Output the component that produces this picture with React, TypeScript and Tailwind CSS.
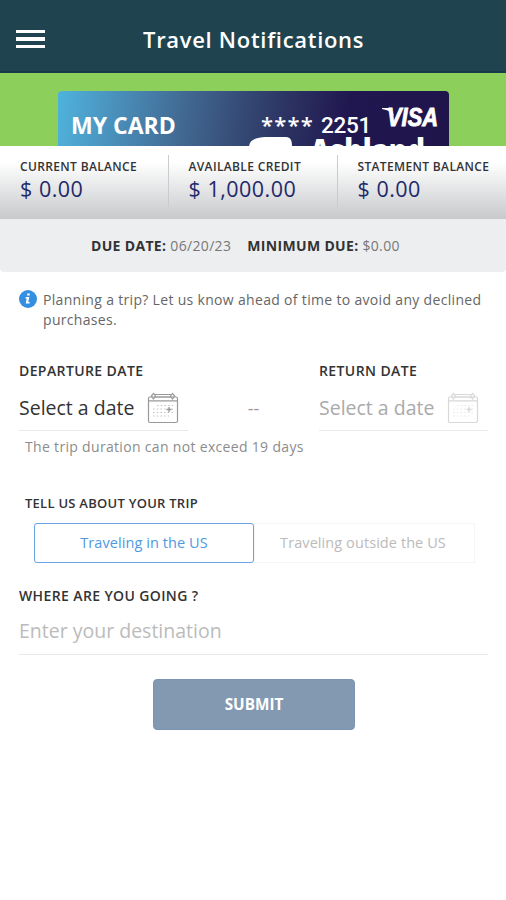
import { useState } from 'react';

const balances = [
  { label: 'CURRENT BALANCE', value: '$ 0.00' },
  { label: 'AVAILABLE CREDIT', value: '$ 1,000.00' },
  { label: 'STATEMENT BALANCE', value: '$ 0.00' },
];

function CalendarIcon({ className }: { className?: string }) {
  return (
    <svg width="32" height="32" viewBox="0 0 32 32" fill="none" stroke="currentColor" strokeWidth="1.2" className={className}>
      <rect x="1.5" y="5" width="29" height="25.5" rx="1.5" />
      <path d="M1.5 8.8h29M8 2.5h16M8 5h16" />
      <path d="M6.5 1.5 4.3 4l2.2 3 2-3zM25.500 1.500l-2 2.500 2 3 2.200-3z" />
      <path d="M10 13.500h16M6 17h20M6 20.500h20M6 24h16" strokeDasharray="1.500 2.200" strokeWidth="1" opacity="0.6" />
      <path d="M22 15v5M19.500 17.500h5" strokeWidth="1.300" />
    </svg>
  );
}

function Header() {
  return (
    <header className="flex h-[73px] items-center border-b-2 border-[#163b4b] bg-[#1f444f] pt-[7px]">
      <button aria-label="Menu" className="ml-4 flex w-[29px] flex-col gap-1">
        <span className="h-[3.500px] bg-white" />
        <span className="h-[3.500px] bg-white" />
        <span className="h-[3.500px] bg-white" />
      </button>
      <h1 className="ml-[98px] text-[22px] font-semibold leading-7 tracking-[0.7px] whitespace-nowrap text-white">
        Travel Notifications
      </h1>
    </header>
  );
}

function CardBanner() {
  return (
    <section className="h-[73px] overflow-hidden bg-[#8ccf5a] pt-[18px]">
      <div className="relative ml-[58px] flex h-[120px] w-[391px] items-start overflow-hidden rounded-[4px] bg-[linear-gradient(97deg,#4fb3dc_0%,#4a94bf_13%,#416891_32%,#2f3b68_53%,#211750_72%,#1f144a_100%)] text-white">
        <span className="mt-[19px] ml-[13px] w-[190px] text-[23px] font-bold leading-[30px] whitespace-nowrap">MY CARD</span>
        <span className="mt-[18px] w-[60px] text-[22px] font-semibold leading-[30px] tracking-[1.2px] whitespace-nowrap">****</span>
        <span className="mt-[19px] text-[22.500px] font-medium leading-[30px] tracking-[-0.3px] whitespace-nowrap font-[Roboto]">2251</span>
        <svg width="60" height="24" viewBox="0 0 60 24" className="absolute top-[14px] left-[323px]" fill="#fff">
          <path d="M1 3h9l3 8C10 7 7 5 1 4z" />
          <text x="6" y="20.500" fontFamily="Liberation Sans" fontSize="25" fontWeight="700" fontStyle="italic" textLength="51" lengthAdjust="spacingAndGlyphs" stroke="#fff" strokeWidth="0.9">VISA</text>
        </svg>
        <svg width="180" height="50" viewBox="0 0 180 50" className="absolute top-[44px] left-[191px]" fill="#fff">
          <path d="M0 11C1 4 8 2 20 2h17c5 0 6 4 6 10v28H0z" />
          <text x="61" y="28" fontFamily="Open Sans" fontSize="33" fontWeight="800" textLength="115" lengthAdjust="spacingAndGlyphs">Ashland</text>
        </svg>
      </div>
    </section>
  );
}

function Balances() {
  return (
    <section className="flex h-[73px] bg-[linear-gradient(to_bottom,#fff_0%,#fff_22%,#c7c9cb_100%)] pt-[9px]">
      {balances.map((b, i) => (
        <div key={b.label} className={i === 0 ? 'h-[52px] w-[168px] pl-5' : 'h-[52px] w-[169px] border-l border-[#c9cbce] pl-[19.500px]'}>
          <p className="pt-[5px] text-[12px] font-semibold leading-[14px] tracking-[0.35px] whitespace-nowrap text-[#333]">{b.label}</p>
          <p className="pt-[2px] text-[21.500px] leading-[26px] tracking-[0.5px] whitespace-nowrap text-[#23286b]">{b.value}</p>
        </div>
      ))}
    </section>
  );
}

function DateField({ label, muted }: { label: string; muted?: boolean }) {
  return (
    <div className="w-[169px]">
      <p className="pt-px text-[14px] font-semibold leading-5 tracking-[0.4px] whitespace-nowrap text-[#333]">{label}</p>
      <button className="mt-[8px] flex h-[42px] w-full items-center border-b border-[#e9e9e9] pb-[3px]">
        <span className={muted ? 'w-[128px] text-left text-[19.500px] whitespace-nowrap text-[#aaa]' : 'w-[128px] text-left text-[19.500px] whitespace-nowrap text-[#333]'}>
          Select a date
        </span>
        <CalendarIcon className={muted ? 'text-[#d8d8d8]' : 'text-[#999]'} />
      </button>
    </div>
  );
}

export default function App() {
  const [outside, setOutside] = useState(false);
  const [destination, setDestination] = useState('');
  const active = 'border-[#6ba4e6] text-[#4d9ae2] rounded-[3px]';
  const inactive = 'border-[#f5f5f5] text-[#bbb]';

  return (
    <div className="h-[900px] w-[506px] overflow-hidden bg-white font-['Open_Sans',sans-serif]">
      <Header />
      <CardBanner />
      <Balances />
      <section className="flex h-[53px] items-center gap-4 rounded-b-[4px] bg-[#edeef0] pl-[91px] text-[14px] tracking-[0.33px] whitespace-nowrap text-[#777]">
        <p><b className="font-bold text-[#333]">DUE DATE:</b> 06/20/23</p>
        <p><b className="font-bold text-[#333]">MINIMUM DUE:</b> $0.00</p>
      </section>

      <main className="pt-[18px] pr-[18px] pl-[19px]">
        <div className="flex">
          <svg width="18" height="18" viewBox="0 0 18 18" className="mr-[6px] shrink-0">
            <circle cx="9" cy="9" r="9" fill="#348fe0" />
            <path d="M8.200 3.500h2.500v2.100H8.200zM6.800 7h3.500l-1 5h1.500l-.3 1.500H6.700L7.700 8.500H6.500z" fill="#fff" />
          </svg>
          <p className="text-[14px] leading-5 tracking-[0.32px] text-[#666]">
            Planning a trip? Let us know ahead of time to avoid any declined purchases.
          </p>
        </div>

        <div className="mt-[30px] flex justify-between">
          <DateField label="DEPARTURE DATE" />
          <span className="mt-[36px] text-[18px] leading-6 text-[#999]">--</span>
          <DateField label="RETURN DATE" muted />
        </div>
        <p className="mt-[6px] ml-[6px] text-[14px] leading-5 tracking-[0.32px] whitespace-nowrap text-[#8c8c8c]">The trip duration can not exceed 19 days</p>

        <p className="mt-[37px] ml-[6px] text-[13px] font-semibold leading-[18px] tracking-[0.26px] whitespace-nowrap text-[#333]">TELL US ABOUT YOUR TRIP</p>
        <div className="mt-[11px] ml-[15px] flex h-10 w-[441px] text-[14.500px] tracking-[0.08px]">
          <button onClick={() => setOutside(false)} className={`w-[220px] border pb-[1px] whitespace-nowrap ${outside ? inactive : active}`}>
            Traveling in the US
          </button>
          <button onClick={() => setOutside(true)} className={`w-[221px] border pr-[3px] pb-[1px] whitespace-nowrap ${outside ? active : inactive}`}>
            Traveling outside the US
          </button>
        </div>

        <label className="mt-[23px] block">
          <span className="block text-[14px] font-semibold leading-5 tracking-[0.38px] whitespace-nowrap text-[#333]">WHERE ARE YOU GOING ?</span>
          <input
            value={destination}
            onChange={(e) => setDestination(e.target.value)}
            placeholder="Enter your destination"
            className="mt-[2px] block h-[47px] w-full border-b border-[#e8e8e8] pb-[1px] text-[19.500px] text-[#333] outline-none placeholder:text-[#bbb]"
          />
        </label>

        <button className="mt-[24px] ml-[134px] block h-[51px] w-[202px] rounded-[4px] border border-[#7c94b3] bg-[#8399b1] pb-px text-[15.300px] font-bold text-white">
          SUBMIT
        </button>
      </main>
    </div>
  );
}
